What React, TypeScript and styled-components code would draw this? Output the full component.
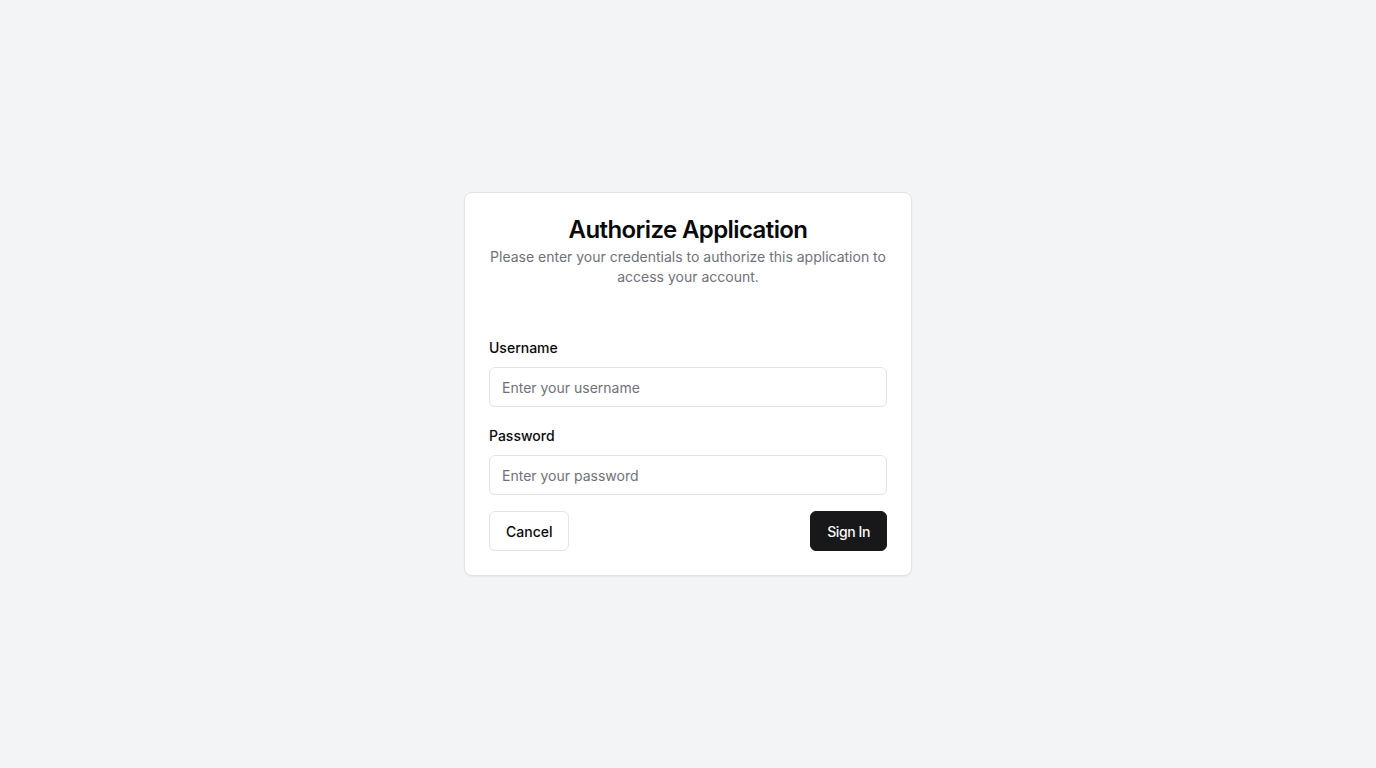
import styled, { createGlobalStyle } from "styled-components";

const GlobalStyle = createGlobalStyle`
  * { box-sizing: border-box; }
  body {
    margin: 0;
    font-family: Inter, "Noto Sans", "Liberation Sans", sans-serif;
    background: #f3f4f6;
    color: #09090b;
  }
`

const Page = styled.div`
  min-height: 100vh;
  display: flex;
  align-items: center;
  justify-content: center;
`

const Card = styled.div`
  width: 448px;
  background: #ffffff;
  border: 1px solid #e4e4e7;
  border-radius: 8px;
  box-shadow: 0 1px 2px rgba(0, 0, 0, 0.05);
  padding: 25px 24px 24px;
`

const Header = styled.div`
  display: flex;
  flex-direction: column;
  align-items: center;
  gap: 5px;
  text-align: center;
  margin-bottom: 51px;
`

const Title = styled.h1`
  margin: 0;
  font-size: 24px;
  line-height: 24px;
  font-weight: 600;
  letter-spacing: -0.6px;
`

const Description = styled.p`
  margin: 0;
  font-size: 14px;
  line-height: 20px;
  color: #71717a;
`

const Form = styled.form`
  display: flex;
  flex-direction: column;
  gap: 19px;
`

const Field = styled.div`
  display: flex;
  flex-direction: column;
  gap: 9px;
`

const Label = styled.label`
  font-size: 14px;
  line-height: 20px;
  font-weight: 500;
`

const Input = styled.input`
  height: 40px;
  width: 100%;
  border: 1px solid #e4e4e7;
  border-radius: 6px;
  padding: 0 12px;
  font-family: inherit;
  font-size: 14px;
  color: #09090b;
  background: #ffffff;
  outline: none;

  &::placeholder {
    color: #71717a;
  }
`

const Actions = styled.div`
  display: flex;
  justify-content: space-between;
  margin-top: -3px;
`

const Button = styled.button<{ $primary?: boolean }>`
  height: 40px;
  padding: 0 16px;
  border-radius: 6px;
  font-family: inherit;
  font-size: 14px;
  font-weight: 500;
  cursor: pointer;
  letter-spacing: ${(p) => (p.$primary ? "-0.4px" : "0")};
  border: 1px solid ${(p) => (p.$primary ? "#18181b" : "#e4e4e7")};
  background: ${(p) => (p.$primary ? "#18181b" : "#ffffff")};
  color: ${(p) => (p.$primary ? "#fafafa" : "#09090b")};
`

export default function App() {
    return (
        <>
            <GlobalStyle />
            <Page>
                <Card>
                    <Header>
                        <Title>Authorize Application</Title>
                        <Description>
                            Please enter your credentials to authorize this application to access your account.
                        </Description>
                    </Header>
                    <Form onSubmit={(e) => e.preventDefault()}>
                        <Field>
                            <Label htmlFor="username">Username</Label>
                            <Input id="username" placeholder="Enter your username" />
                        </Field>
                        <Field>
                            <Label htmlFor="password">Password</Label>
                            <Input id="password" type="password" placeholder="Enter your password" />
                        </Field>
                        <Actions>
                            <Button type="button">Cancel</Button>
                            <Button type="submit" $primary>Sign In</Button>
                        </Actions>
                    </Form>
                </Card>
            </Page>
        </>
    );
}
